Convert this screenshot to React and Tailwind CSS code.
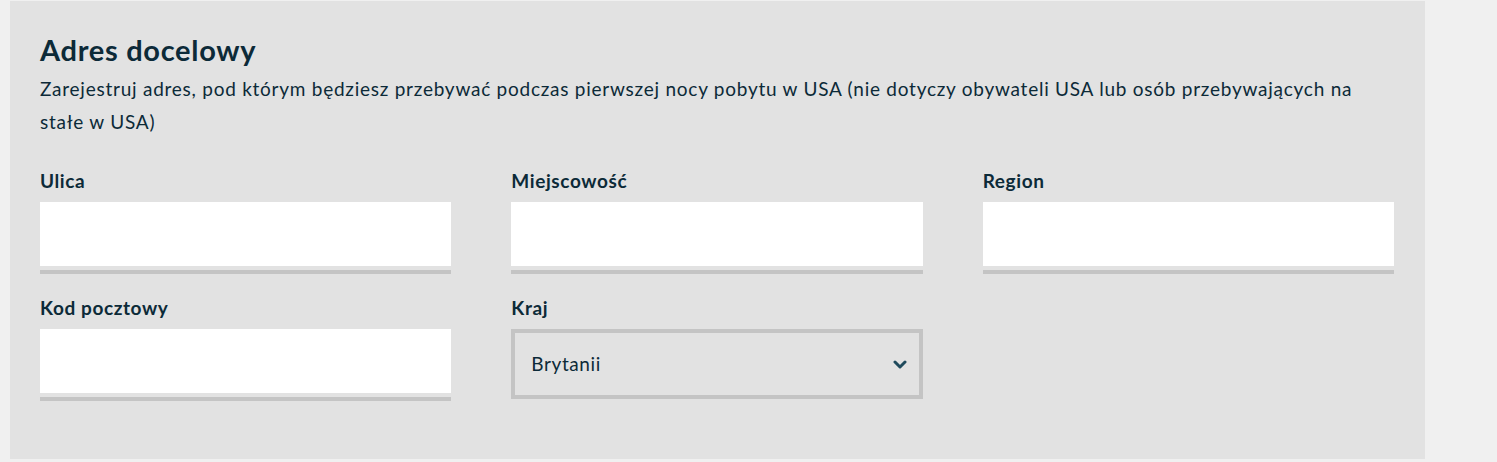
import React from "react";

const Field = ({ label }) => (
  <div className="flex flex-col">
    <label className="text-[19px] font-bold text-[#0c2a38] leading-[24px] tracking-[0.6px] mb-[9px]">{label}</label>
    <div className="h-[64px] bg-white" />
    <div className="h-[4px] bg-[#c4c4c4] mt-[4px]" />
  </div>
);

const App = () => {
  return (
    <div className="min-h-screen bg-[#f0f0f0] pt-[1px] pl-[10px]" style={{ fontFamily: "Lato, 'Open Sans', sans-serif" }}>
      <div className="w-[1415px] h-[458px] bg-[#e2e2e2] px-[30px] pt-[30px]">
        {/* Heading */}
        <h2 className="text-[29px] font-bold text-[#0c2a38] leading-[38px] tracking-[0.7px]">Adres docelowy</h2>
        <p className="text-[19px] text-[#0c2a38] leading-[33px] tracking-[0.75px] mt-[3px] max-w-[1340px]">
          Zarejestruj adres, pod którym będziesz przebywać podczas pierwszej nocy pobytu w USA (nie dotyczy obywateli USA lub osób przebywających na stałe w USA)
        </p>

        {/* Address fields */}
        <div className="grid grid-cols-3 gap-x-[60px] gap-y-[22px] mt-[31px] w-[1354px]">
          <Field label="Ulica" />
          <Field label="Miejscowość" />
          <Field label="Region" />
          <Field label="Kod pocztowy" />
          <div className="flex flex-col">
            <label className="text-[19px] font-bold text-[#0c2a38] leading-[24px] tracking-[0.6px] mb-[9px]">Kraj</label>
            <div className="h-[70px] border-[4px] border-[#c4c4c4] flex items-center justify-between pl-[16px] pr-[12px]">
              <span className="text-[19px] text-[#0c2a38] tracking-[0.6px]">Brytanii</span>
              <svg width="14" height="9" viewBox="0 0 14 9">
                <path d="M2 2 L7 7 L12 2" fill="none" stroke="#1f4a5c" strokeWidth="3" strokeLinecap="round" strokeLinejoin="round" />
              </svg>
            </div>
          </div>
        </div>
      </div>
    </div>
  );
};

export default App;
